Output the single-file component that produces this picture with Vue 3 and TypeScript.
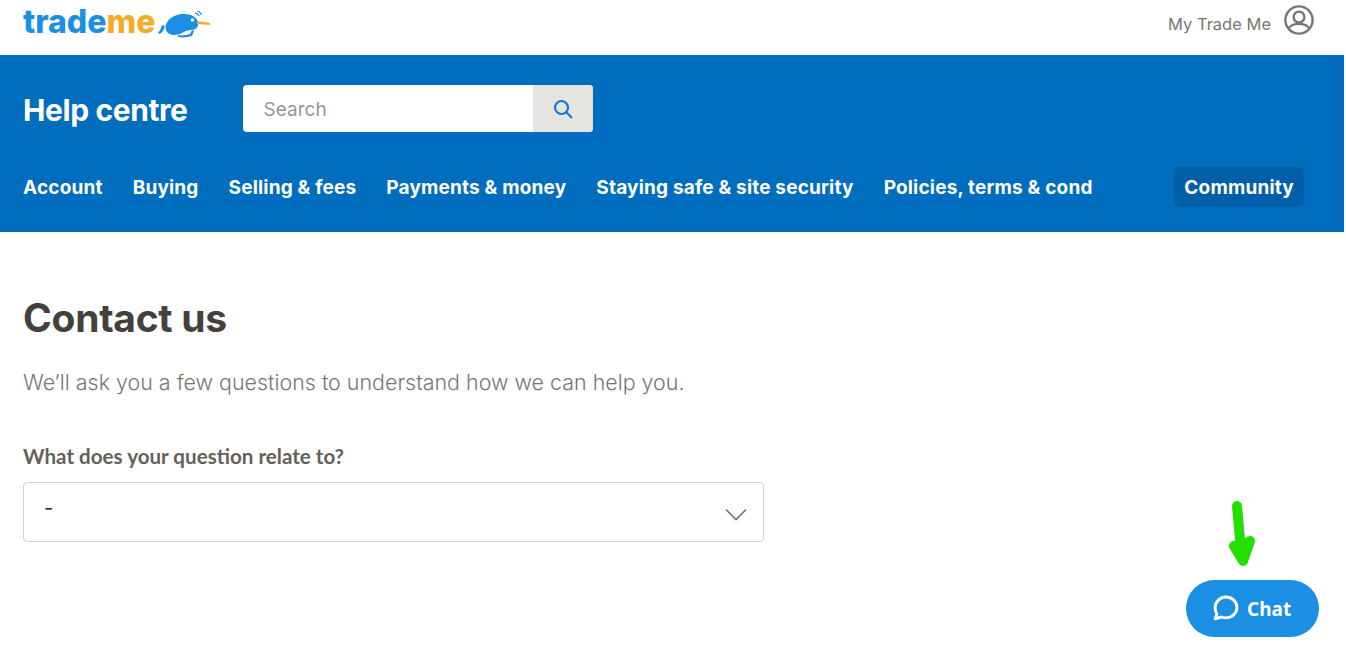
<script setup lang="ts">
const navItems = [
  'Account',
  'Buying',
  'Selling & fees',
  'Payments & money',
  'Staying safe & site security',
  'Policies, terms & cond',
]
</script>

<template>
  <div class="page">
    <header class="topbar">
      <a class="logo">
        <span class="logo__trade">trade</span><span class="logo__me">me</span>
        <svg class="logo__kiwi" width="54" height="28" viewBox="0 0 54 28">
          <path d="M4 14c-1 3-2 6-4 8l2 1c3-2 4-5 5-8z" fill="#1a8fe3" />
          <path d="M8 19C6 11 14 3 26 3c7 0 13 3 14 8 1 5-2 8-7 8-3 0-6 1-9 3-6 3-14 3-16-3z" fill="#1a8fe3" />
          <path d="M20 24c4 1 9 0 12-1l2-4 2 1-2 5c-4 1-9 2-14 1z" fill="#1a8fe3" />
          <path d="M39 10l13 2v2l-13-1z" fill="#f4ab2a" />
          <circle cx="34.500" cy="9" r="1.800" fill="#fff" />
          <path d="M37 2c2 0 3 1 4 3M39 0c2 0 4 2 4 4" fill="none" stroke="#1a8fe3" stroke-width="1.200" />
        </svg>
      </a>
      <a class="account">
        <span>My Trade Me</span>
        <svg width="30" height="30" viewBox="0 0 30 30" fill="none" stroke="#7b7570" stroke-width="2.400">
          <circle cx="15" cy="15" r="13.600" />
          <circle cx="15" cy="12" r="5.400" />
          <path d="M4.500 23.500c2-3 6-4.600 10.500-4.600s8.500 1.600 10.500 4.600" />
        </svg>
      </a>
    </header>

    <section class="hero">
      <div class="hero__top">
        <h2 class="hero__title">Help centre</h2>
        <div class="search">
          <span class="search__input">Search</span>
          <button class="search__btn" type="button">
            <svg width="20" height="20" viewBox="0 0 20 20" fill="none" stroke="#0f7ad1" stroke-width="2.200">
              <circle cx="8.500" cy="8.500" r="6.500" />
              <path d="M13.300 13.300L19 19" />
            </svg>
          </button>
        </div>
      </div>
      <nav class="nav">
        <a v-for="item in navItems" :key="item" class="nav__item">{{ item }}</a>
        <a class="nav__community">Community</a>
      </nav>
    </section>

    <main class="content">
      <h1 class="content__title">Contact us</h1>
      <p class="content__lead">We’ll ask you a few questions to understand how we can help you.</p>
      <label class="field-label">What does your question relate to?</label>
      <div class="select">
        <span class="select__value">-</span>
        <svg width="22" height="13" viewBox="0 0 22 13" fill="none" stroke="#77716c" stroke-width="1.600">
          <path d="M1 1.500l10 10 10-10" />
        </svg>
      </div>
    </main>

    <svg class="arrow" width="30" height="70" viewBox="0 0 30 70" fill="none" stroke="#26dd00" stroke-linecap="round" stroke-linejoin="round">
      <path d="M9 8l4.500 50" stroke-width="10" />
      <path d="M6 48l9 15 7-20-8 4z" stroke-width="10" fill="#26dd00" />
    </svg>

    <button class="chat" type="button">
      <svg width="27" height="27" viewBox="0 0 26 26" fill="none" stroke="#fff" stroke-width="2.800" stroke-linejoin="round">
        <path d="M13.500 2C19.300 2 24 6.500 24 12s-4.700 10-10.500 10c-1.500 0-3-.3-4.300-.8L3 23l1.700-4.700C3.600 16.500 3 14.300 3 12 3 6.500 7.700 2 13.500 2z" />
      </svg>
      <span>Chat</span>
    </button>
  </div>
</template>

<style>
html,
body {
  margin: 0;
  background: #fff;
}
</style>

<style scoped>
.page {
  position: relative;
  height: 649px;
  width: 1344px;
  overflow: hidden;
  font-family: Inter, "Liberation Sans", sans-serif;
  color: #44413c;
}

.topbar {
  display: flex;
  justify-content: space-between;
  height: 55px;
  padding: 0 30px 0 23px;
}

.logo {
  display: flex;
  align-items: flex-start;
  padding-top: 3px;
  font-size: 32px;
  font-weight: 800;
  line-height: 38px;
}

.logo__trade {
  color: #1a8fe3;
}

.logo__me {
  color: #f4ab2a;
}

.logo__kiwi {
  margin: 8px 0 0 3px;
}

.account {
  display: flex;
  align-items: flex-start;
  gap: 13px;
  padding-top: 5px;
  font-size: 16.500px;
  line-height: 38px;
  color: #7b7570;
}

.hero {
  height: 177px;
  box-sizing: border-box;
  padding: 30px 40px 0 23px;
  background: #006dbf;
  color: #fff;
}

.hero__top {
  display: flex;
  align-items: center;
  gap: 55px;
}

.hero__title {
  margin: 0;
  padding-top: 2px;
  font-size: 30px;
  font-weight: 700;
  letter-spacing: -0.4px;
  white-space: nowrap;
}

.search {
  display: flex;
  width: 350px;
  height: 47px;
  border-radius: 4px;
  overflow: hidden;
  background: #fff;
}

.search__input {
  flex: 1;
  padding-left: 21px;
  font-size: 19px;
  line-height: 49px;
  color: #9c9690;
}

.search__btn {
  display: flex;
  align-items: center;
  justify-content: center;
  width: 60px;
  padding: 0;
  border: 0;
  background: #e6e4e1;
}

.nav {
  display: flex;
  align-items: center;
  gap: 30px;
  margin-top: 35px;
  font-size: 19px;
  font-weight: 700;
  letter-spacing: 0.18px;
  white-space: nowrap;
}

.nav__community {
  margin-left: auto;
  padding: 1px 10px 0;
  line-height: 39px;
  border-radius: 6px;
  background: #005fa8;
}

.content {
  padding: 62px 23px 0;
}

.content__title {
  margin: 0;
  font-size: 39px;
  font-weight: 700;
  line-height: 48px;
  letter-spacing: -0.3px;
}

.content__lead {
  margin: 24px 0 0;
  font-size: 21.450px;
  line-height: 32px;
  font-weight: 300;
  color: #7b7570;
}

.field-label {
  display: block;
  margin-top: 45px;
  font-family: Lato, sans-serif;
  font-size: 20.600px;
  font-weight: 700;
  line-height: 26px;
  color: #65605a;
}

.select {
  display: flex;
  align-items: center;
  justify-content: space-between;
  box-sizing: border-box;
  width: 741px;
  height: 60px;
  margin-top: 13px;
  padding: 0 16px 0 20px;
  border: 1px solid #d3d0cc;
  border-radius: 4px;
}

.select__value {
  margin-top: -8px;
  font-size: 20px;
  color: #2d2a26;
}

.select svg {
  margin-top: 4px;
}

.arrow {
  position: absolute;
  left: 1228px;
  top: 498px;
}

.chat {
  position: absolute;
  left: 1186px;
  top: 580px;
  display: flex;
  align-items: center;
  gap: 8px;
  width: 133px;
  height: 57px;
  padding: 0 0 0 26px;
  border: 0;
  border-radius: 29px;
  background: #1a8fe3;
  color: #fff;
  font-family: "Noto Sans", sans-serif;
  font-size: 19px;
  font-weight: 700;
}
</style>
